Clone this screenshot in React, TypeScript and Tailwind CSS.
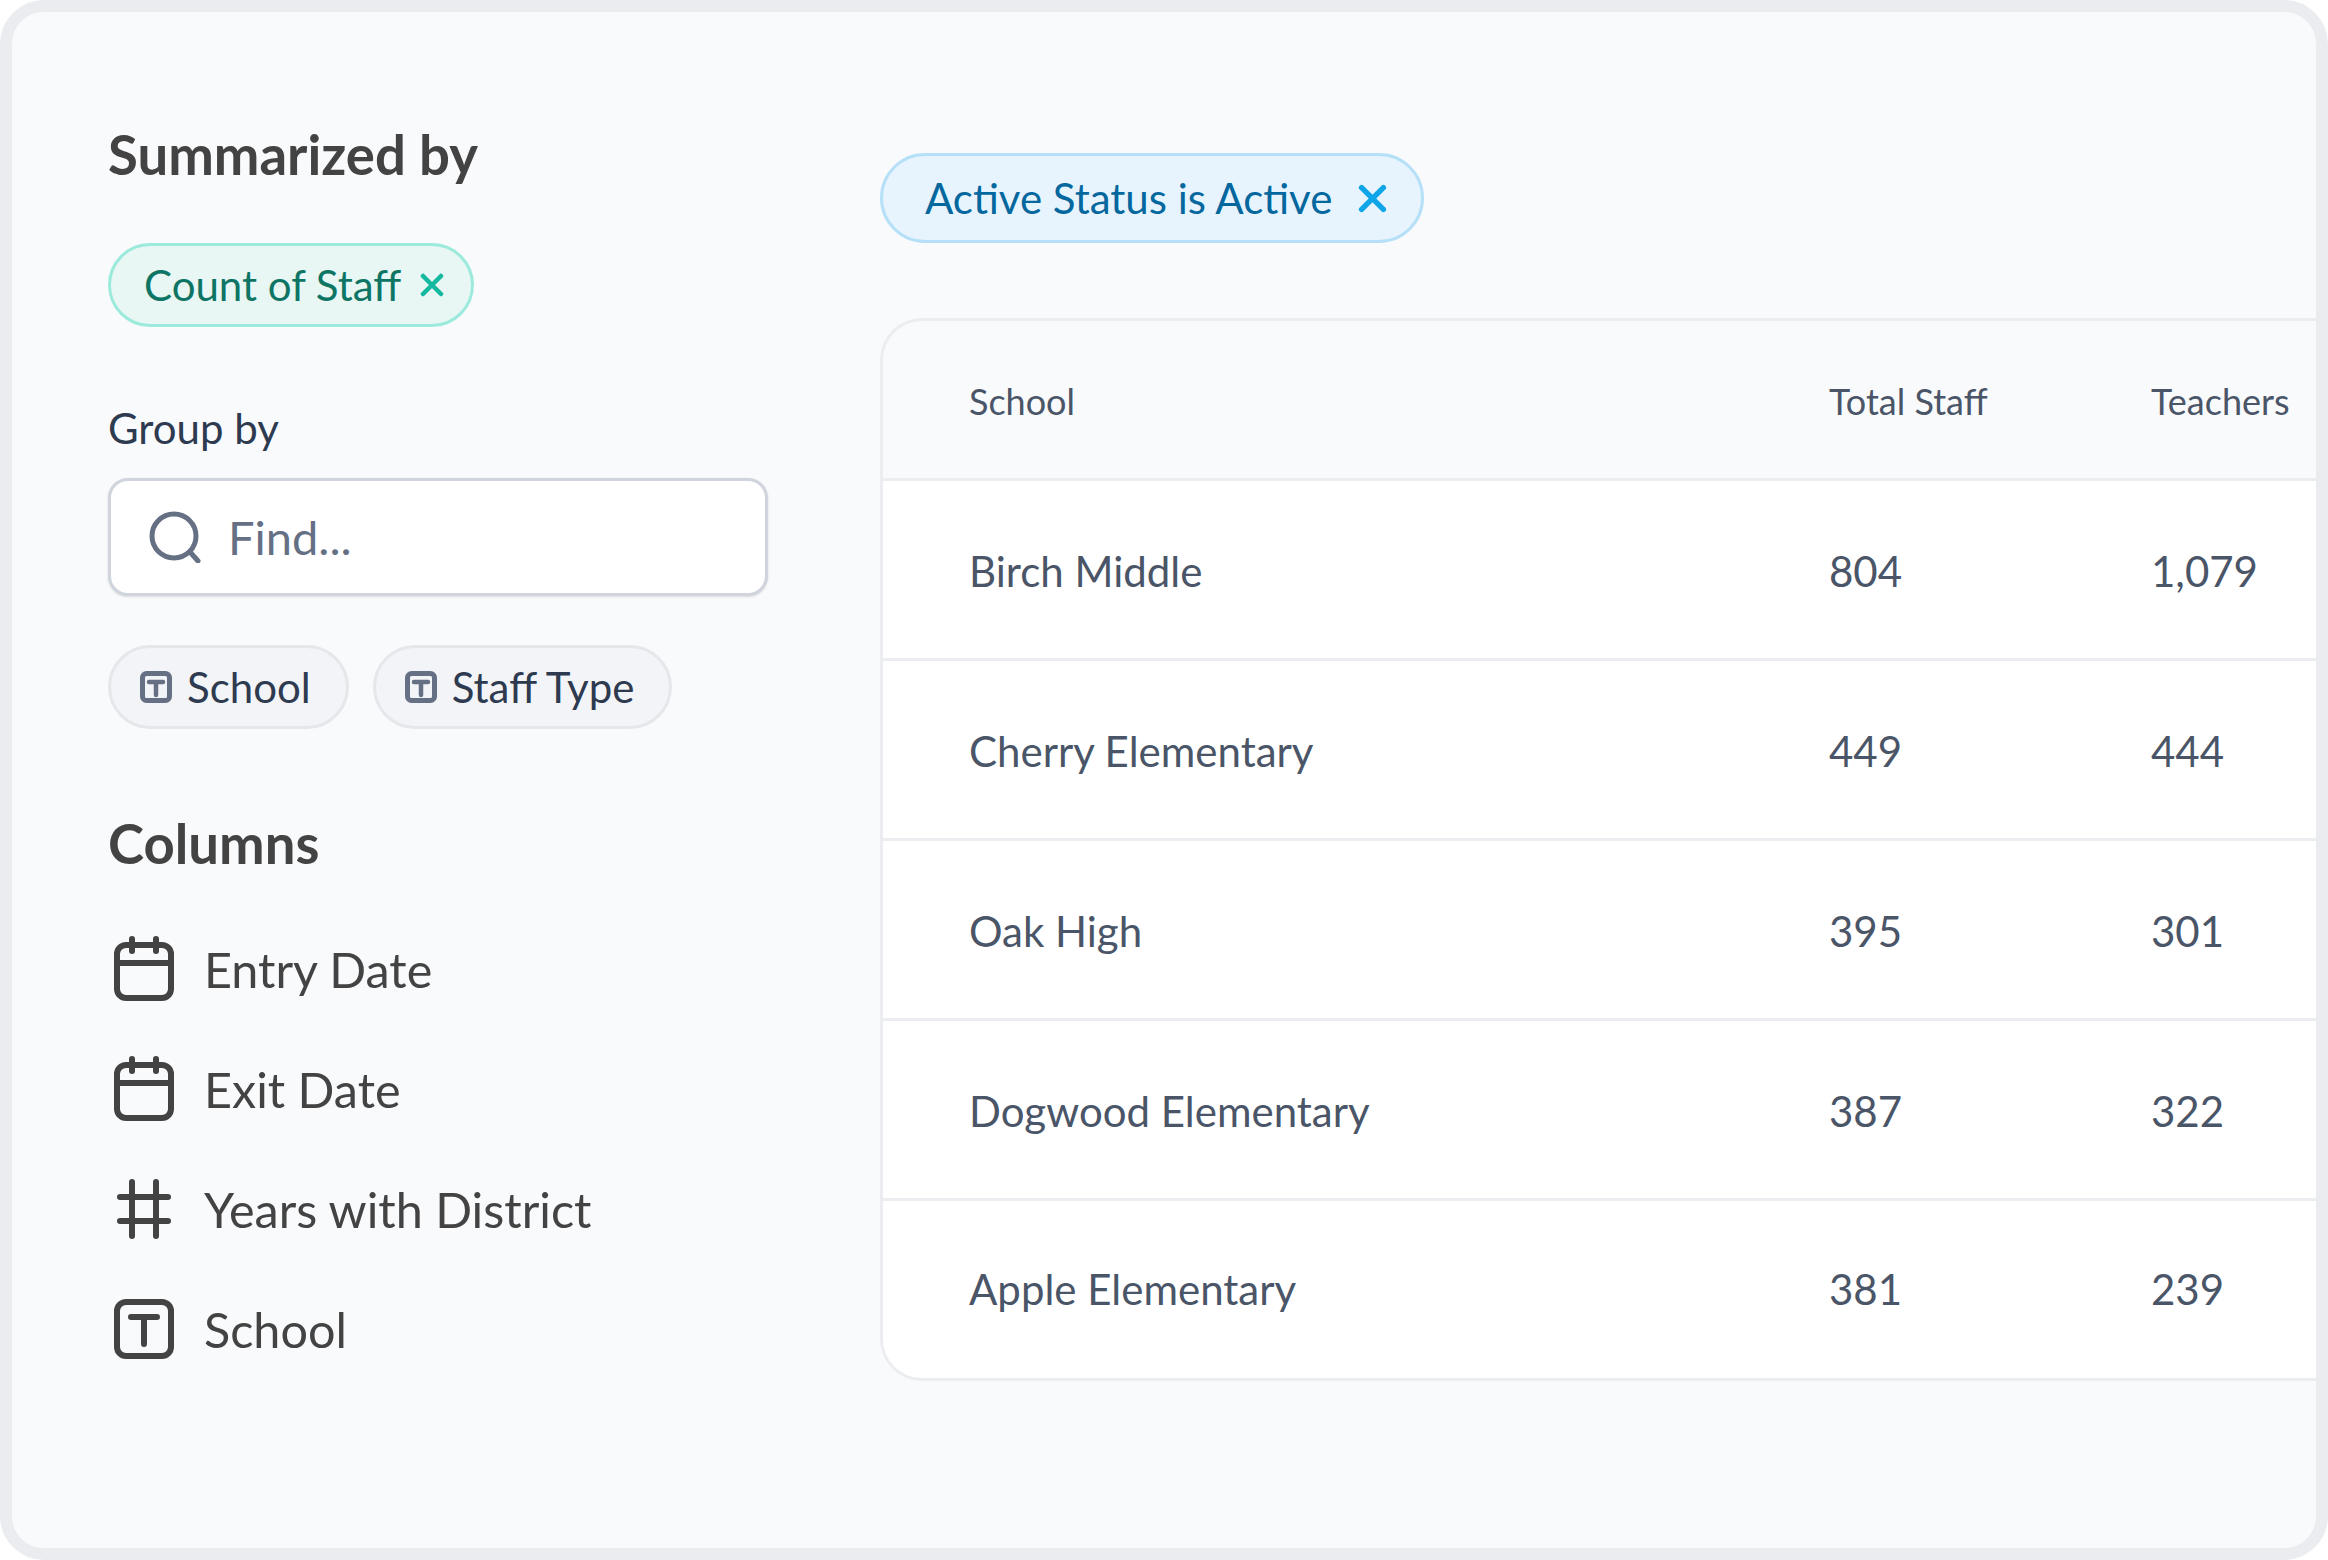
import React from 'react';

const rows = [
  { school: 'Birch Middle', total: '804', teachers: '1,079' },
  { school: 'Cherry Elementary', total: '449', teachers: '444' },
  { school: 'Oak High', total: '395', teachers: '301' },
  { school: 'Dogwood Elementary', total: '387', teachers: '322' },
  { school: 'Apple Elementary', total: '381', teachers: '239' },
];

const CalendarIcon = () => (
  <svg viewBox="0 0 60 66" className="w-[60px] h-[66px]" fill="none" stroke="currentColor" strokeWidth="6" strokeLinecap="round">
    <rect x="3" y="9" width="54" height="53" rx="9" />
    <path d="M3 27H57" strokeLinecap="butt" />
    <path d="M18 3V15M42 3V15" />
  </svg>
);

const HashIcon = () => (
  <svg viewBox="0 0 60 66" className="w-[60px] h-[66px]" fill="none" stroke="currentColor" strokeWidth="6" strokeLinecap="round">
    <path d="M18 6V60M42 6V60M6 21H54M6 45H54" />
  </svg>
);

const TextIcon = () => (
  <svg viewBox="0 0 60 66" className="w-[60px] h-[66px]" fill="none" stroke="currentColor" strokeWidth="6" strokeLinecap="round">
    <rect x="3" y="6" width="54" height="54" rx="9" />
    <path d="M17 21H43M30 21V48" />
  </svg>
);

const SmallTextIcon = () => (
  <svg viewBox="0 0 32 32" className="w-[32px] h-[32px] text-[#667085]" fill="none" stroke="currentColor" strokeWidth="5" strokeLinecap="round">
    <rect x="2.5" y="2.5" width="27" height="27" rx="4" />
    <path d="M9 11H23M16 11V24" strokeWidth="4.5" />
  </svg>
);

const CloseIcon = ({ className }: { className: string }) => (
  <svg viewBox="0 0 24 24" className={className} fill="none" stroke="currentColor" strokeWidth="4.5" strokeLinecap="round">
    <path d="M3 3L21 21M21 3L3 21" />
  </svg>
);

const App: React.FC = () => {
  return (
    <div className="w-[2328px] h-[1560px] bg-white font-['Lato',sans-serif]">
      <div className="w-full h-full flex overflow-hidden rounded-[44px] border-[12px] border-[#ebecef] bg-[#f9fafc]">

        {/* Sidebar */}
        <div className="w-[868px] shrink-0 pl-[96px] pt-[112px] flex flex-col">
          <h2 className="text-[54.5px] leading-[60px] font-bold text-[#434343]">Summarized by</h2>

          <div className="mt-[59px] self-start h-[84px] pl-[33px] pr-[27px] flex items-center gap-[19px] rounded-full border-[3px] border-[#9beadb] bg-[#e8f7f3]">
            <span className="text-[42px] text-[#0e7565]">Count of Staff</span>
            <CloseIcon className="w-[24px] h-[24px] text-[#14b8a0]" />
          </div>

          <div className="mt-[75px] text-[42px] leading-[52px] text-[#2d3a50]">Group by</div>

          <div className="mt-[24px] w-[660px] h-[118px] pl-[38px] flex items-center gap-[27px] rounded-[20px] border-[3px] border-[#d0d5dd] bg-white shadow-sm">
            <svg viewBox="0 0 52 52" className="w-[52px] h-[52px] text-[#667085]" fill="none" stroke="currentColor" strokeWidth="5" strokeLinecap="round">
              <circle cx="25" cy="25" r="22" />
              <path d="M41 41L49 50" />
            </svg>
            <span className="text-[47px] text-[#667085]">Find...</span>
          </div>

          <div className="mt-[49px] flex gap-[24px]">
            {['School', 'Staff Type'].map((label) => (
              <div key={label} className="h-[84px] pl-[29px] pr-[35px] flex items-center gap-[15px] rounded-full border-[3px] border-[#e5e7eb] bg-[#f2f4f7]">
                <SmallTextIcon />
                <span className="text-[42px] text-[#2d3a50]">{label}</span>
              </div>
            ))}
          </div>

          <h2 className="mt-[84px] text-[54.5px] leading-[60px] font-bold text-[#434343]">Columns</h2>

          <div className="mt-[63px] flex flex-col gap-[54px] text-[#434343]">
            {[
              { label: 'Entry Date', icon: <CalendarIcon /> },
              { label: 'Exit Date', icon: <CalendarIcon /> },
              { label: 'Years with District', icon: <HashIcon /> },
              { label: 'School', icon: <TextIcon /> },
            ].map((col) => (
              <div key={col.label} className="h-[66px] flex items-center gap-[30px] pl-[6px]">
                {col.icon}
                <span className="text-[48.5px]">{col.label}</span>
              </div>
            ))}
          </div>
        </div>

        {/* Main */}
        <div className="flex-1 min-w-0 pt-[141px]">
          <div className="inline-flex h-[90px] pl-[42px] pr-[34px] items-center gap-[26px] rounded-full border-[3px] border-[#b6e0f7] bg-[#e8f4fd]">
            <span className="text-[42px] text-[#04689f]">Active Status is Active</span>
            <CloseIcon className="w-[29px] h-[29px] text-[#0ea5e9]" />
          </div>

          <div className="mt-[75px] overflow-hidden rounded-l-[42px] border-y-[3px] border-l-[3px] border-[#ecedf0]">
            <div className="h-[160px] pt-[3px] grid grid-cols-[860px_322px_1fr] items-center border-b-[3px] border-[#ecedf0] pl-[86px] text-[36px] text-[#4a5568]">
              <span>School</span>
              <span>Total Staff</span>
              <span>Teachers</span>
            </div>
            {rows.map((row, i) => (
              <div key={row.school} className={`grid grid-cols-[860px_322px_1fr] items-center bg-white pl-[86px] text-[42px] text-[#4a5568] ${i < rows.length - 1 ? 'h-[180px] pt-[3px] border-b-[3px] border-[#ecedf0]' : 'h-[177px]'}`}>
                <span>{row.school}</span>
                <span>{row.total}</span>
                <span>{row.teachers}</span>
              </div>
            ))}
          </div>
        </div>

      </div>
    </div>
  );
};

export default App;
